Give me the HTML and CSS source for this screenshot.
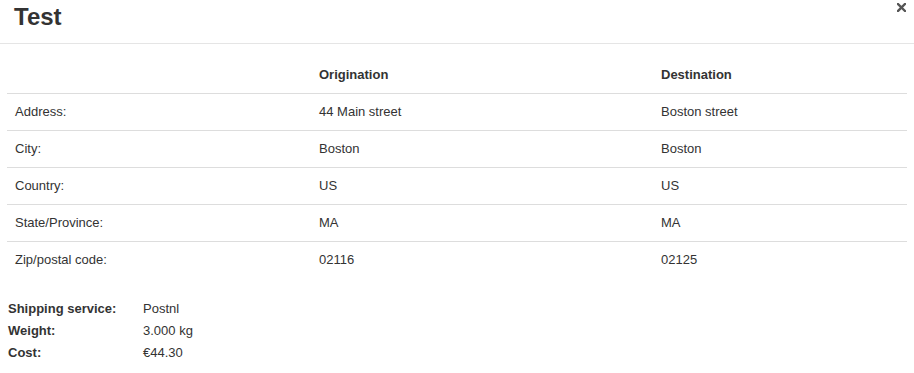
FILE: index.html
```html
<!DOCTYPE html>
<html lang="en">
<head>
    <meta charset="UTF-8">
    <title>Test - Shipment</title>
    <link rel="stylesheet" href="styles.css">
</head>
<body>
    <div class="modal">
        <div class="modal-header">
            <h4 class="modal-title">Test</h4>
            <button class="close" type="button" aria-label="Close">
                <svg width="9" height="9" viewBox="0 0 9 9"><path d="M1 1L8 8M8 1L1 8" stroke="#555" stroke-width="2.4" stroke-linecap="square"/></svg>
            </button>
        </div>

        <div class="modal-body">
            <table class="address-table">
                <thead>
                    <tr>
                        <th class="col-label"></th>
                        <th class="col-from">Origination</th>
                        <th class="col-to">Destination</th>
                    </tr>
                </thead>
                <tbody>
                    <tr>
                        <td>Address:</td>
                        <td>44 Main street</td>
                        <td>Boston street</td>
                    </tr>
                    <tr>
                        <td>City:</td>
                        <td>Boston</td>
                        <td>Boston</td>
                    </tr>
                    <tr>
                        <td>Country:</td>
                        <td>US</td>
                        <td>US</td>
                    </tr>
                    <tr>
                        <td>State/Province:</td>
                        <td>MA</td>
                        <td>MA</td>
                    </tr>
                    <tr>
                        <td>Zip/postal code:</td>
                        <td>02116</td>
                        <td>02125</td>
                    </tr>
                </tbody>
            </table>

            <dl class="shipping-info">
                <dt>Shipping service:</dt>
                <dd>Postnl</dd>
                <dt>Weight:</dt>
                <dd>3.000 kg</dd>
                <dt>Cost:</dt>
                <dd>€44.30</dd>
            </dl>
        </div>
    </div>
</body>
</html>
```

FILE: styles.css
```css
* {
    box-sizing: border-box;
    margin: 0;
    padding: 0;
}

body {
    font-family: "Liberation Sans", Arial, sans-serif;
    font-size: 13px;
    color: #333;
    background: #fff;
}

.modal {
    position: relative;
    width: 914px;
}

.modal-header {
    height: 44px;
    padding: 2px 14px 0;
    border-bottom: 1px solid #e5e5e5;
}

.modal-title {
    font-size: 24px;
    font-weight: bold;
    line-height: 30px;
}

.close {
    position: absolute;
    top: 3px;
    right: 8px;
    display: flex;
    border: none;
    background: transparent;
    cursor: pointer;
}

.modal-body {
    padding: 13px 7px 0;
}

.address-table {
    width: 900px;
    border-collapse: collapse;
}

.address-table th,
.address-table td {
    padding: 8px;
    line-height: 20px;
    text-align: left;
    vertical-align: top;
}

.address-table th {
    font-weight: bold;
}

.address-table tr {
    border-bottom: 1px solid #ddd;
}

.address-table tbody tr:last-child {
    border-bottom: none;
}

.col-label { width: 304px; }
.col-from { width: 342px; }
.col-to { width: 254px; }

.shipping-info {
    display: grid;
    grid-template-columns: 135px auto;
    margin: 20px 0 0 1px;
    line-height: 22px;
}

.shipping-info dt {
    font-weight: bold;
}
```
